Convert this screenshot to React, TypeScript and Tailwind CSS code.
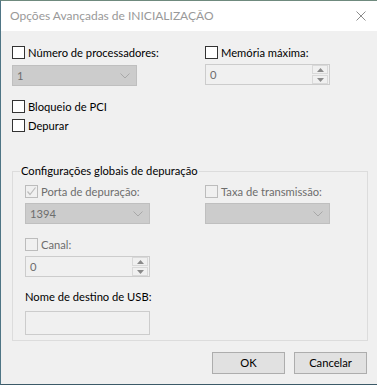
import React from 'react';

const FONT = { fontFamily: 'Lato, "Liberation Sans", sans-serif' };

function Check({ label, disabled, checked }: { label: string; disabled?: boolean; checked?: boolean }) {
  return (
    <div className="flex items-center h-[13px]">
      <div
        className={
          'w-[13px] h-[13px] border flex items-center justify-center shrink-0 ' +
          (disabled ? 'border-[#bcbcbc] bg-[#f0f0f0]' : 'border-[#333333] bg-white')
        }
      >
        {checked && (
          <svg width="11" height="11" viewBox="0 0 11 11">
            <path d="M1.5 5.5 L4 8.5 L9.5 1.5" fill="none" stroke="#bcbcbc" strokeWidth="1.2" />
          </svg>
        )}
      </div>
      <span className={'ml-[3px] text-[11.2px] leading-none ' + (disabled ? 'text-[#6d6d6d]' : 'text-black')}>
        {label}
      </span>
    </div>
  );
}

function Combo({ value }: { value: string }) {
  return (
    <div className="w-[125px] h-[21px] bg-[#cccccc] border border-[#bfbfbf] flex items-center justify-between pl-[4px] pr-[6px]">
      <span className="text-[11.2px] text-[#6d6d6d] leading-none">{value}</span>
      <svg width="10" height="6" viewBox="0 0 10 6">
        <path d="M0.5 0.5 L5 5 L9.5 0.5" fill="none" stroke="#a8a8a8" strokeWidth="1" />
      </svg>
    </div>
  );
}

function Spinner({ value }: { value: string }) {
  return (
    <div className="w-[125px] h-[21px] bg-[#f0f0f0] border border-[#cccccc] flex items-center justify-between pl-[4px] pr-[1px]">
      <span className="text-[11.2px] text-[#6d6d6d] leading-none">{value}</span>
      <div className="flex flex-col gap-[1px]">
        <div className="w-[16px] h-[9px] border border-[#d9d9d9] flex items-center justify-center">
          <svg width="7" height="4" viewBox="0 0 7 4">
            <path d="M0 4 L3.5 0 L7 4 Z" fill="#8a8a8a" />
          </svg>
        </div>
        <div className="w-[16px] h-[9px] border border-[#d9d9d9] flex items-center justify-center">
          <svg width="7" height="4" viewBox="0 0 7 4">
            <path d="M0 0 L3.5 4 L7 0 Z" fill="#8a8a8a" />
          </svg>
        </div>
      </div>
    </div>
  );
}

function Button({ label }: { label: string }) {
  return (
    <div className="w-[73px] h-[22px] bg-[#e1e1e1] border border-[#adadad] flex items-center justify-center text-[11.2px] text-black">
      {label}
    </div>
  );
}

export default function App() {
  return (
    <div
      className="w-[377px] h-[385px] flex flex-col border-l border-t border-b border-l-[#4f7585] border-t-[#6f8a7e] border-b-[#3c5a68] overflow-hidden"
      style={FONT}
    >
      {/* Title bar */}
      <div className="h-[30px] bg-white flex items-center justify-between pl-[9px] pr-[11px] shrink-0">
        <span className="text-[12px] text-[#999999]">Opções Avançadas de INICIALIZAÇÃO</span>
        <svg width="10" height="10" viewBox="0 0 10 10">
          <path d="M0.5 0.5 L9.5 9.5 M9.5 0.5 L0.5 9.5" stroke="#8c8c8c" strokeWidth="1" />
        </svg>
      </div>

      {/* Body */}
      <div className="flex-1 bg-[#f0f0f0] pl-[11px] pr-[9px] pt-[15px]">
        <div className="grid grid-cols-[193px_1fr]">
          <div className="flex flex-col">
            <Check label="Número de processadores:" />
            <div className="mt-[6px]">
              <Combo value="1" />
            </div>
          </div>
          <div className="flex flex-col">
            <Check label="Memória máxima:" />
            <div className="mt-[5px]">
              <Spinner value="0" />
            </div>
          </div>
        </div>

        <div className="mt-[14px] flex flex-col gap-[6px]">
          <Check label="Bloqueio de PCI" />
          <Check label="Depurar" />
        </div>

        {/* Group box */}
        <div className="mt-[39px] h-[170px] border border-[#dcdcdc] relative pl-[12px] pt-[13px]">
          <span className="absolute -top-[9px] left-[7px] bg-[#f0f0f0] px-[1px] text-[11.2px] leading-[16px] text-black">
            Configurações globais de depuração
          </span>
          <div className="grid grid-cols-[180px_1fr]">
            <div className="flex flex-col">
              <Check label="Porta de depuração:" disabled checked />
              <div className="mt-[5px]">
                <Combo value="1394" />
              </div>
            </div>
            <div className="flex flex-col">
              <Check label="Taxa de transmissão:" disabled />
              <div className="mt-[5px]">
                <Combo value="" />
              </div>
            </div>
          </div>
          <div className="mt-[14px]">
            <Check label="Canal:" disabled />
          </div>
          <div className="mt-[5px]">
            <Spinner value="0" />
          </div>
          <div className="mt-[14px] text-[11.2px] leading-none text-black">Nome de destino de USB:</div>
          <div className="mt-[9px] w-[125px] h-[24px] bg-[#f0f0f0] border border-[#cccccc]" />
        </div>

        <div className="mt-[11px] flex justify-end gap-[9px] pr-[1px]">
          <Button label="OK" />
          <Button label="Cancelar" />
        </div>
      </div>
    </div>
  );
}
